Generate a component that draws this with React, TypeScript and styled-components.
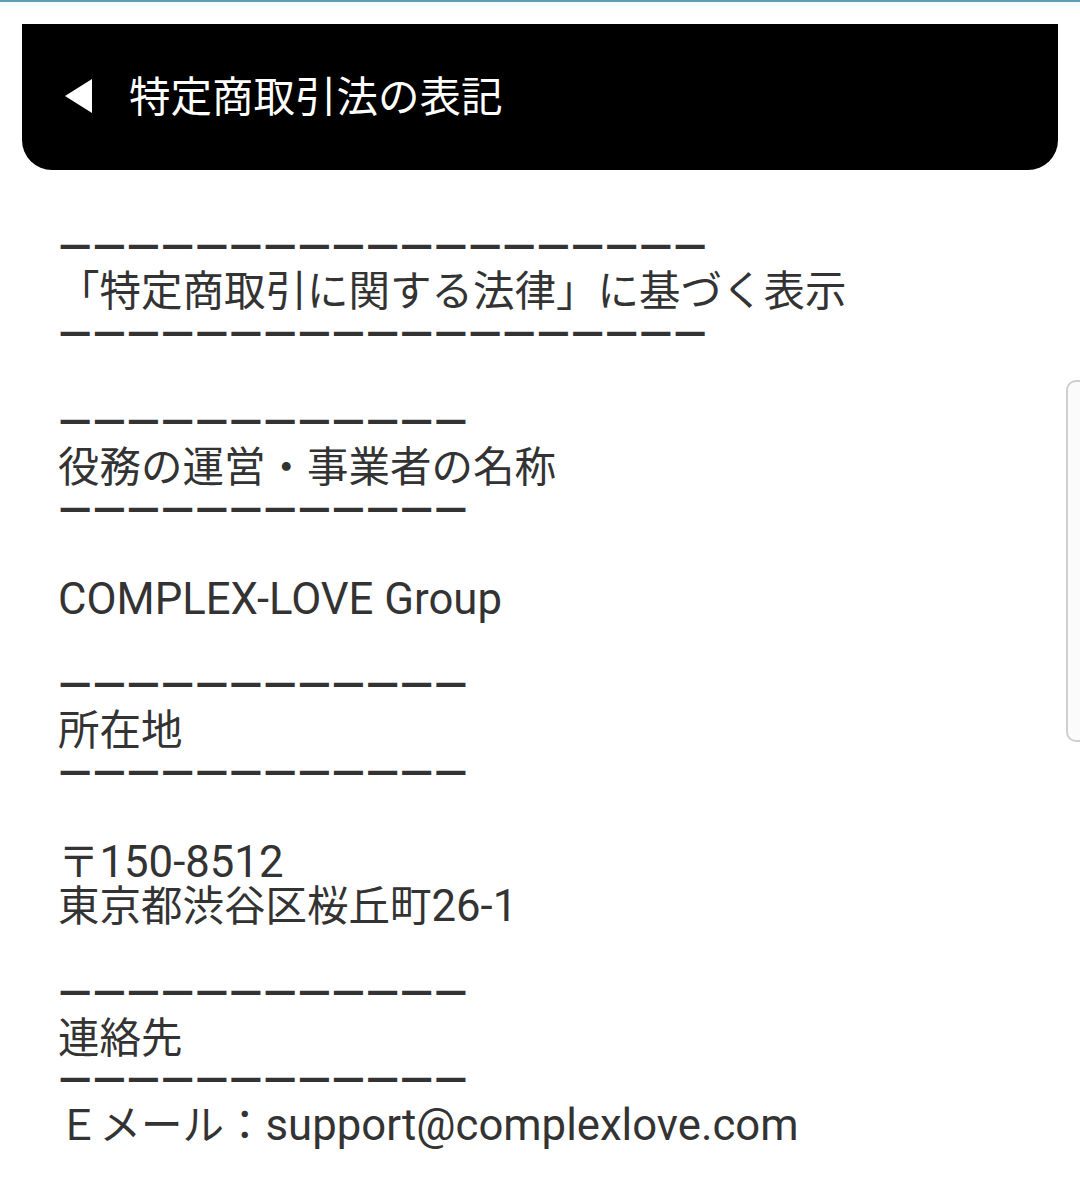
import React from "react";
import styled, { createGlobalStyle } from "styled-components";

const GlobalStyle = createGlobalStyle`
  html, body {
    margin: 0;
    padding: 0;
    background: #ffffff;
  }
  body {
    font-family: Roboto, "Noto Sans CJK JP", sans-serif;
  }
`;

const Page = styled.div`
  position: relative;
  width: 1080px;
  min-height: 1196px;
  background: #ffffff;
  overflow: hidden;
`;

const TopStripe = styled.div`
  height: 12px;
  border-top: 2px solid #5e9db3;
  background: linear-gradient(#f2fbfc, #ffffff);
`;

const HeaderWrap = styled.div`
  padding: 10px 22px 0 22px;
`;

const Header = styled.header`
  display: flex;
  align-items: center;
  height: 146px;
  background: #000000;
  border-radius: 0 0 30px 30px;
  padding-left: 43px;
  gap: 37px;
`;

const BackTriangle = styled.span`
  display: block;
  width: 0;
  height: 0;
  border-top: 17px solid transparent;
  border-bottom: 17px solid transparent;
  border-right: 27px solid #ffffff;
  margin-top: -2px;
`;

const Title = styled.h1`
  margin: 0;
  color: #ffffff;
  font-family: "Noto Sans CJK JP", sans-serif;
  font-weight: 400;
  font-size: 41.5px;
  line-height: 1;
  margin-top: -4px;
`;

const Content = styled.main`
  padding: 56.5px 0 0 58px;
  color: #333333;
  font-size: 41.5px;
`;

const Line = styled.div`
  height: 43.9px;
  line-height: 43.9px;
  white-space: nowrap;
  overflow: visible;
`;

const Latin = styled.span`
  font-family: Roboto, sans-serif;
  font-size: 43.7px;
`;

const Rule = styled(Line)`
  font-family: Roboto, sans-serif;
  font-size: 43.7px;
  font-weight: 500;
  letter-spacing: 0.5px;
`;

const Blank = styled.div`
  height: 43.9px;
`;

const EdgeHandle = styled.div`
  position: absolute;
  left: 1066px;
  top: 380px;
  width: 40px;
  height: 358px;
  border: 2px solid #cfcfcf;
  border-radius: 10px;
  background: #fbfbfb;
`;

const dashes = (n: number) => "—".repeat(n);

export default function App() {
  return (
    <Page>
      <GlobalStyle />
      <TopStripe />
      <HeaderWrap>
        <Header>
          <BackTriangle />
          <Title>特定商取引法の表記</Title>
        </Header>
      </HeaderWrap>
      <Content>
        <Rule>{dashes(19)}</Rule>
        <Line>「特定商取引に関する法律」に基づく表示</Line>
        <Rule>{dashes(19)}</Rule>
        <Blank />
        <Rule>{dashes(12)}</Rule>
        <Line>役務の運営・事業者の名称</Line>
        <Rule>{dashes(12)}</Rule>
        <Blank />
        <Line>
          <Latin>COMPLEX-LOVE Group</Latin>
        </Line>
        <Blank />
        <Rule>{dashes(12)}</Rule>
        <Line>所在地</Line>
        <Rule>{dashes(12)}</Rule>
        <Blank />
        <Line>
          〒<Latin>150-8512</Latin>
        </Line>
        <Line>
          東京都渋谷区桜丘町<Latin>26-1</Latin>
        </Line>
        <Blank />
        <Rule>{dashes(12)}</Rule>
        <Line>連絡先</Line>
        <Rule>{dashes(12)}</Rule>
        <Line>
          Ｅメール：<Latin>support@complexlove.com</Latin>
        </Line>
      </Content>
      <EdgeHandle />
    </Page>
  );
}
